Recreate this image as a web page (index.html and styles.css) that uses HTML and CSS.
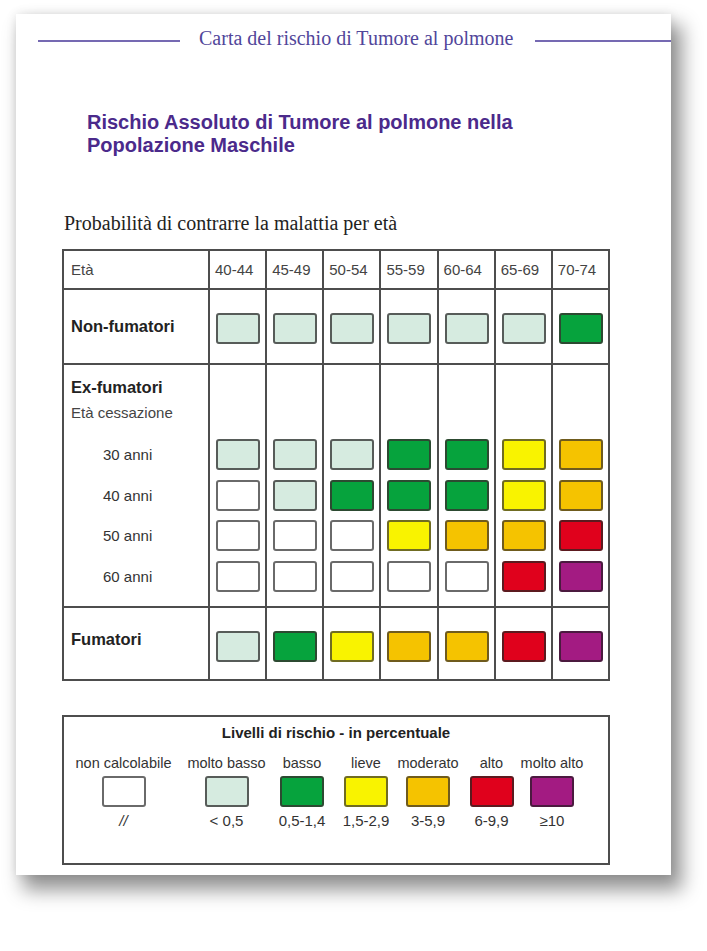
FILE: index.html
```html
<!DOCTYPE html>
<html lang="it">
<head>
<meta charset="utf-8">
<title>Carta del rischio di Tumore al polmone</title>
<link rel="stylesheet" href="styles.css">
</head>
<body>
<div class="page">
  <div class="running-head">
    <span class="rule rule-left"></span>
    <span class="head-text">Carta del rischio di Tumore al polmone</span>
    <span class="rule rule-right"></span>
  </div>

  <h1 class="title">Rischio Assoluto di Tumore al polmone nella<br>Popolazione Maschile</h1>

  <p class="subtitle">Probabilità di contrarre la malattia per età</p>

  <table class="chart">
    <tr class="row-head group-end">
      <th class="lbl">Età</th>
      <th class="age">40-44</th>
      <th class="age">45-49</th>
      <th class="age">50-54</th>
      <th class="age">55-59</th>
      <th class="age">60-64</th>
      <th class="age">65-69</th>
      <th class="age">70-74</th>
    </tr>
    <tr class="row-main group-end">
      <td class="lbl strong mid">Non-fumatori</td>
      <td class="cell"><div class="sw l"></div></td>
      <td class="cell"><div class="sw l"></div></td>
      <td class="cell"><div class="sw l"></div></td>
      <td class="cell"><div class="sw l"></div></td>
      <td class="cell"><div class="sw l"></div></td>
      <td class="cell"><div class="sw l"></div></td>
      <td class="cell"><div class="sw g"></div></td>
    </tr>
    <tr class="row-ex-head">
      <td class="lbl ex-lbl">
        <div class="strong">Ex-fumatori</div>
        <div class="sub">Età cessazione</div>
      </td>
      <td></td><td></td><td></td><td></td><td></td><td></td><td></td>
    </tr>
    <tr class="row-sub">
      <td class="lbl sub-lbl">30 anni</td>
      <td class="cell"><div class="sw l"></div></td>
      <td class="cell"><div class="sw l"></div></td>
      <td class="cell"><div class="sw l"></div></td>
      <td class="cell"><div class="sw g"></div></td>
      <td class="cell"><div class="sw g"></div></td>
      <td class="cell"><div class="sw y"></div></td>
      <td class="cell"><div class="sw o"></div></td>
    </tr>
    <tr class="row-sub">
      <td class="lbl sub-lbl">40 anni</td>
      <td class="cell"><div class="sw w"></div></td>
      <td class="cell"><div class="sw l"></div></td>
      <td class="cell"><div class="sw g"></div></td>
      <td class="cell"><div class="sw g"></div></td>
      <td class="cell"><div class="sw g"></div></td>
      <td class="cell"><div class="sw y"></div></td>
      <td class="cell"><div class="sw o"></div></td>
    </tr>
    <tr class="row-sub">
      <td class="lbl sub-lbl">50 anni</td>
      <td class="cell"><div class="sw w"></div></td>
      <td class="cell"><div class="sw w"></div></td>
      <td class="cell"><div class="sw w"></div></td>
      <td class="cell"><div class="sw y"></div></td>
      <td class="cell"><div class="sw o"></div></td>
      <td class="cell"><div class="sw o"></div></td>
      <td class="cell"><div class="sw r"></div></td>
    </tr>
    <tr class="row-sub row-sub-last group-end">
      <td class="lbl sub-lbl">60 anni</td>
      <td class="cell"><div class="sw w"></div></td>
      <td class="cell"><div class="sw w"></div></td>
      <td class="cell"><div class="sw w"></div></td>
      <td class="cell"><div class="sw w"></div></td>
      <td class="cell"><div class="sw w"></div></td>
      <td class="cell"><div class="sw r"></div></td>
      <td class="cell"><div class="sw p"></div></td>
    </tr>
    <tr class="row-main row-smoker group-end">
      <td class="lbl strong smoker-lbl">Fumatori</td>
      <td class="cell"><div class="sw l"></div></td>
      <td class="cell"><div class="sw g"></div></td>
      <td class="cell"><div class="sw y"></div></td>
      <td class="cell"><div class="sw o"></div></td>
      <td class="cell"><div class="sw o"></div></td>
      <td class="cell"><div class="sw r"></div></td>
      <td class="cell"><div class="sw p"></div></td>
    </tr>
  </table>

  <div class="legend">
    <div class="legend-title">Livelli di rischio - in percentuale</div>
    <div class="legend-grid">
      <div class="legend-item">
        <span class="legend-label">non calcolabile</span>
        <div class="sw w"></div>
        <span class="legend-value italic">//</span>
      </div>
      <div class="legend-item">
        <span class="legend-label">molto basso</span>
        <div class="sw l"></div>
        <span class="legend-value">&lt; 0,5</span>
      </div>
      <div class="legend-item">
        <span class="legend-label">basso</span>
        <div class="sw g"></div>
        <span class="legend-value">0,5-1,4</span>
      </div>
      <div class="legend-item">
        <span class="legend-label">lieve</span>
        <div class="sw y"></div>
        <span class="legend-value">1,5-2,9</span>
      </div>
      <div class="legend-item">
        <span class="legend-label">moderato</span>
        <div class="sw o"></div>
        <span class="legend-value">3-5,9</span>
      </div>
      <div class="legend-item">
        <span class="legend-label">alto</span>
        <div class="sw r"></div>
        <span class="legend-value">6-9,9</span>
      </div>
      <div class="legend-item">
        <span class="legend-label">molto alto</span>
        <div class="sw p"></div>
        <span class="legend-value">≥10</span>
      </div>
    </div>
  </div>
</div>
</body>
</html>
```

FILE: styles.css
```css
html, body {
  margin: 0;
  background: #ffffff;
}

body {
  box-sizing: border-box;
  min-height: 951px;
  padding: 14px 0 0 16px;
  font-family: "Liberation Sans", Arial, sans-serif;
  color: #222;
}

.page {
  width: 655px;
  height: 861px;
  background: #ffffff;
  box-shadow: 0 0 10px rgba(0, 0, 0, 0.10), 9px 13px 18px 2px rgba(0, 0, 0, 0.42);
  overflow: hidden;
}

/* running head */
.running-head {
  display: flex;
  align-items: flex-start;
  padding: 12px 0 0 22px;
}

.rule {
  display: block;
  height: 2px;
  margin-top: 14px;
  background: #7569b2;
}

.rule-left {
  width: 142px;
}

.rule-right {
  flex: 1;
}

.head-text {
  font-family: "Liberation Serif", "Times New Roman", serif;
  font-size: 20px;
  line-height: 24px;
  color: #51469a;
  margin: 0 22px 0 19px;
  white-space: nowrap;
}

/* title */
.title {
  margin: 61px 0 0 0;
  padding-left: 71px;
  font-family: "Liberation Sans", Arial, sans-serif;
  font-weight: bold;
  font-size: 20px;
  line-height: 23px;
  color: #4b2a8b;
}

.subtitle {
  margin: 54px 0 0 0;
  padding-left: 48px;
  font-family: "Liberation Serif", "Times New Roman", serif;
  font-size: 20px;
  line-height: 24px;
  color: #222;
}

/* chart table */
.chart {
  margin: 14px 0 0 46px;
  width: 548px;
  table-layout: fixed;
  border-collapse: separate;
  border-spacing: 0;
  border-left: 2px solid #4d4d4d;
  border-top: 2px solid #4d4d4d;
}

.chart th,
.chart td {
  box-sizing: border-box;
  border-right: 2px solid #4d4d4d;
  padding: 0;
  text-align: left;
  vertical-align: top;
}

.chart .group-end > th,
.chart .group-end > td {
  border-bottom: 2px solid #4d4d4d;
}

.chart th.lbl {
  width: 146px;
}

.lbl {
  padding-left: 7px !important;
}

.row-head th {
  height: 39px;
  vertical-align: middle;
  font-weight: normal;
  font-size: 15px;
  color: #444;
}

.row-head .age {
  padding-left: 5px;
}

.row-main td {
  height: 75px;
}

.row-main .cell {
  padding-top: 23px;
}

.mid {
  vertical-align: middle !important;
}

.strong {
  font-weight: bold;
  font-size: 16.5px;
  line-height: 19px;
  color: #222;
}

.row-ex-head td {
  height: 69px;
}

.ex-lbl {
  padding-top: 13px !important;
}

.sub {
  margin-top: 7px;
  font-size: 15px;
  line-height: 17px;
  color: #444;
}

.row-sub td {
  height: 40.5px;
  padding-top: 5px;
}

.row-sub-last td {
  height: 52.5px;
}

.sub-lbl {
  padding-left: 39px !important;
  font-size: 15px;
  line-height: 31px;
  color: #333;
}

.row-smoker td {
  height: 73px;
}

.smoker-lbl {
  padding-top: 22px !important;
}

.cell {
  padding-left: 6px !important;
}

/* swatches */
.sw {
  box-sizing: border-box;
  width: 44px;
  height: 31px;
  border: 2px solid #4a4a4a;
  border-radius: 3px;
}

.sw.w { background: #ffffff; border-color: #6a6a6a; }
.sw.l { background: #d6ebe0; border-color: #575c59; }
.sw.g { background: #06a33d; border-color: #2c4a31; }
.sw.y { background: #f9f300; border-color: #706c22; }
.sw.o { background: #f5c300; border-color: #6f5b1d; }
.sw.r { background: #e0011c; border-color: #5c1a1f; }
.sw.p { background: #a31b82; border-color: #4b1a3f; }

/* legend */
.legend {
  box-sizing: border-box;
  margin: 34px 0 0 46px;
  width: 548px;
  height: 150px;
  border: 2px solid #4d4d4d;
}

.legend-title {
  padding-top: 7px;
  text-align: center;
  font-weight: bold;
  font-size: 15px;
  line-height: 18px;
  color: #222;
}

.legend-grid {
  display: grid;
  grid-template-columns: 119px 87px 64px 64px 60px 67px 54px;
  margin-top: 13px;
}

.legend-item {
  display: flex;
  flex-direction: column;
  align-items: center;
}

.legend-label {
  font-size: 14.5px;
  line-height: 17px;
  color: #333;
  white-space: nowrap;
}

.legend-item .sw {
  margin-top: 4px;
}

.legend-value {
  margin-top: 5px;
  font-size: 15px;
  line-height: 17px;
  color: #333;
  white-space: nowrap;
}

.italic {
  font-style: italic;
}
```
